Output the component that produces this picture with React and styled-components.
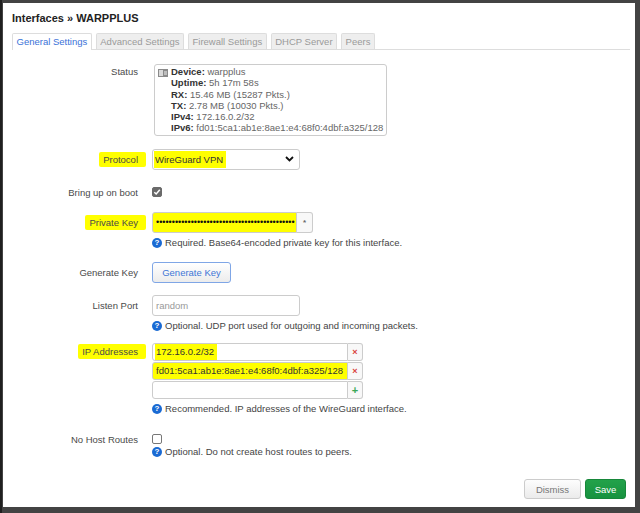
import React from 'react';
import styled, { createGlobalStyle } from 'styled-components';

const GlobalStyle = createGlobalStyle`
  html, body { margin: 0; padding: 0; }
  body {
    background: #404040;
    font-family: "Liberation Sans", Arial, sans-serif;
  }
`;

const Page = styled.div`
  width: 640px;
  height: 513px;
  box-sizing: border-box;
  padding: 3px 5px 6px 3px;
  background: linear-gradient(to right, #1f1f1f 0 2px, #434343 2px);
`;

const Modal = styled.div`
  height: 100%;
  box-sizing: border-box;
  background: #fff;
  padding: 8px 9px 8px 0;
  display: flex;
  flex-direction: column;
`;

const Title = styled.h2`
  margin: 0 0 0 9px;
  font-size: 11px;
  line-height: 14px;
  font-weight: bold;
  color: #222;
`;

const TabList = styled.div`
  display: flex;
  gap: 4px;
  margin: 8px -4px 0 9px;
  border-bottom: 1px solid #ddd;
  height: 16px;
`;

const Tab = styled.div`
  box-sizing: border-box;
  height: ${p => (p.$active ? 17 : 16)}px;
  padding: 0 3.5px;
  border: 1px solid #ddd;
  border-bottom: none;
  border-radius: 2px 2px 0 0;
  background: ${p => (p.$active ? '#fff' : '#eee')};
  color: ${p => (p.$active ? '#3a72d8' : '#9a9a9a')};
  font-size: 9.5px;
  line-height: 15px;
  white-space: nowrap;
`;

const Form = styled.div`
  display: flex;
  flex-direction: column;
`;

const Row = styled.div`
  display: grid;
  grid-template-columns: 149px 1fr;
  margin-top: ${p => p.$mt}px;
`;

const Label = styled.div`
  text-align: right;
  padding-right: 14px;
  font-size: 9.5px;
  line-height: ${p => p.$lh}px;
  color: #4a4a4a;
  white-space: nowrap;
`;

const Mark = styled.span`
  background: #ffff00;
  padding: 2px 8px 2px 4px;
  margin: 0 -8px 0 -4px;
  border-radius: 2px;
`;

const Field = styled.div`
  display: flex;
  flex-direction: column;
  align-items: flex-start;
`;

const StatusBox = styled.div`
  margin-left: 2px;
  border: 1px solid #ccc;
  border-radius: 3px;
  padding: 1px 3px 1px 3px;
  display: flex;
  gap: 3px;
  font-size: 9.5px;
  line-height: 11.3px;
  color: #666;
`;

const StatusIcon = styled.div`
  padding-top: 2px;
`;

const StatusLines = styled.div`
  display: flex;
  flex-direction: column;
  white-space: nowrap;
  b { color: #333; }
`;

const Select = styled.div`
  box-sizing: border-box;
  width: 148px;
  height: 21px;
  border: 1px solid #ccc;
  border-radius: 3px;
  display: flex;
  align-items: center;
  justify-content: space-between;
  padding: 0 5px 0 2px;
  font-size: 9.5px;
  color: #333;
`;

const SelMark = styled.span`
  background: #ffff00;
  padding: 3px 3px 3px 1px;
  margin-left: -1px;
`;

const CheckBox = styled.div`
  box-sizing: border-box;
  width: 10px;
  height: 10px;
  margin-top: 2.5px;
  border-radius: 2px;
  border: 1px solid ${p => (p.$checked ? '#6a6a6a' : '#777')};
  background: ${p => (p.$checked ? '#6a6a6a' : '#fff')};
  display: flex;
  align-items: center;
  justify-content: center;
`;

const Group = styled.div`
  display: flex;
`;

const TextBox = styled.div`
  box-sizing: border-box;
  width: ${p => p.$w}px;
  height: ${p => p.$h || 21}px;
  border: 1px solid #ccc;
  border-radius: ${p => (p.$joined ? '3px 0 0 3px' : '3px')};
  background: ${p => (p.$marked ? '#ffff00' : '#fff')};
  display: flex;
  align-items: center;
  padding: 0 3px;
  font-size: 9.5px;
  color: ${p => (p.$placeholder ? '#999' : '#333')};
  white-space: nowrap;
  overflow: hidden;
`;

const Dots = styled.span`
  font-size: 9px;
  color: #111;
`;

const Addon = styled.div`
  box-sizing: border-box;
  width: ${p => p.$w || 16}px;
  height: ${p => p.$h || 21}px;
  border: 1px solid #ccc;
  border-left: none;
  border-radius: 0 3px 3px 0;
  background: #f8f8f8;
  display: flex;
  align-items: center;
  justify-content: center;
  font-size: ${p => p.$fs || 9}px;
  font-weight: bold;
  color: ${p => p.$color || '#666'};
`;

const Help = styled.div`
  display: flex;
  align-items: center;
  gap: 3px;
  margin-top: ${p => p.$mt ?? 4}px;
  font-size: 9.5px;
  line-height: 12px;
  color: #444;
  white-space: nowrap;
`;

const HelpIcon = styled.span`
  width: 10px;
  height: 10px;
  border-radius: 50%;
  background: #1a6ad3;
  color: #fff;
  font-size: 8px;
  font-weight: bold;
  line-height: 10px;
  text-align: center;
`;

const KeyButton = styled.div`
  box-sizing: border-box;
  width: 79px;
  height: 21px;
  border: 1px solid #7fa6e6;
  border-radius: 3px;
  background: linear-gradient(#ffffff, #ececec);
  color: #3f76d6;
  font-size: 9.5px;
  display: flex;
  align-items: center;
  justify-content: center;
`;

const DynList = styled.div`
  display: flex;
  flex-direction: column;
  gap: 1px;
`;

const Footer = styled.div`
  margin-top: auto;
  display: flex;
  justify-content: flex-end;
  gap: 4px;
`;

const FootButton = styled.div`
  box-sizing: border-box;
  height: 20px;
  width: ${p => p.$w}px;
  border-radius: 3px;
  border: 1px solid ${p => (p.$primary ? '#17873a' : '#ccc')};
  background: ${p => (p.$primary ? 'linear-gradient(#22a24a, #17923f)' : 'linear-gradient(#fdfdfd, #ebebeb)')};
  color: ${p => (p.$primary ? '#fff' : '#777')};
  font-size: 9.5px;
  display: flex;
  align-items: center;
  justify-content: center;
`;

const HelpLine = ({ children, mt }) => (
  <Help $mt={mt}>
    <HelpIcon>?</HelpIcon>
    <span>{children}</span>
  </Help>
);

const Check = () => (
  <svg width="8" height="8" viewBox="0 0 8 8">
    <path d="M1.3 4.2 L3.2 6 L6.8 1.8" fill="none" stroke="#fff" strokeWidth="1.5" />
  </svg>
);

export default function App() {
  return (
    <>
      <GlobalStyle />
      <Page>
        <Modal>
          <Title>Interfaces » WARPPLUS</Title>
          <TabList>
            <Tab $active>General Settings</Tab>
            <Tab>Advanced Settings</Tab>
            <Tab>Firewall Settings</Tab>
            <Tab>DHCP Server</Tab>
            <Tab>Peers</Tab>
          </TabList>
          <Form>
            <Row $mt={14}>
              <Label $lh={16}>Status</Label>
              <Field>
                <StatusBox>
                  <StatusIcon>
                    <svg width="10" height="8" viewBox="0 0 10 8">
                      <rect x="0" y="0" width="10" height="8" fill="#8a8a8a" />
                      <rect x="1" y="1" width="4" height="6" fill="#d9d9d9" />
                      <rect x="6" y="2" width="3" height="4" fill="#bdbdbd" />
                    </svg>
                  </StatusIcon>
                  <StatusLines>
                    <span><b>Device:</b> warpplus</span>
                    <span><b>Uptime:</b> 5h 17m 58s</span>
                    <span><b>RX:</b> 15.46 MB (15287 Pkts.)</span>
                    <span><b>TX:</b> 2.78 MB (10030 Pkts.)</span>
                    <span><b>IPv4:</b> 172.16.0.2/32</span>
                    <span><b>IPv6:</b> fd01:5ca1:ab1e:8ae1:e4:68f0:4dbf:a325/128</span>
                  </StatusLines>
                </StatusBox>
              </Field>
            </Row>

            <Row $mt={13}>
              <Label $lh={21}><Mark>Protocol</Mark></Label>
              <Field>
                <Select>
                  <SelMark>WireGuard VPN</SelMark>
                  <svg width="9" height="6" viewBox="0 0 9 6">
                    <path d="M1 1 L4.5 4.5 L8 1" fill="none" stroke="#111" strokeWidth="1.8" />
                  </svg>
                </Select>
              </Field>
            </Row>

            <Row $mt={15}>
              <Label $lh={15}>Bring up on boot</Label>
              <Field>
                <CheckBox $checked><Check /></CheckBox>
              </Field>
            </Row>

            <Row $mt={12}>
              <Label $lh={21}><Mark>Private Key</Mark></Label>
              <Field>
                <Group>
                  <TextBox $w={145} $joined $marked>
                    <Dots>{'•'.repeat(44)}</Dots>
                  </TextBox>
                  <Addon $w={16} $fs={8}>*</Addon>
                </Group>
                <HelpLine>Required. Base64-encoded private key for this interface.</HelpLine>
              </Field>
            </Row>

            <Row $mt={13}>
              <Label $lh={21}>Generate Key</Label>
              <Field>
                <KeyButton>Generate Key</KeyButton>
              </Field>
            </Row>

            <Row $mt={12}>
              <Label $lh={21}>Listen Port</Label>
              <Field>
                <TextBox $w={148} $placeholder>random</TextBox>
                <HelpLine>Optional. UDP port used for outgoing and incoming packets.</HelpLine>
              </Field>
            </Row>

            <Row $mt={11}>
              <Label $lh={18}><Mark>IP Addresses</Mark></Label>
              <Field>
                <DynList>
                  <Group>
                    <TextBox $w={196} $h={18} $joined><SelMark>172.16.0.2/32</SelMark></TextBox>
                    <Addon $w={15} $h={18} $color="#d9403a">×</Addon>
                  </Group>
                  <Group>
                    <TextBox $w={196} $h={18} $joined $marked>fd01:5ca1:ab1e:8ae1:e4:68f0:4dbf:a325/128</TextBox>
                    <Addon $w={15} $h={18} $color="#d9403a">×</Addon>
                  </Group>
                  <Group>
                    <TextBox $w={196} $h={18} $joined />
                    <Addon $w={15} $h={18} $fs={11} $color="#3aa757">+</Addon>
                  </Group>
                </DynList>
                <HelpLine>Recommended. IP addresses of the WireGuard interface.</HelpLine>
              </Field>
            </Row>

            <Row $mt={17}>
              <Label $lh={15}>No Host Routes</Label>
              <Field>
                <CheckBox />
                <HelpLine mt={2}>Optional. Do not create host routes to peers.</HelpLine>
              </Field>
            </Row>
          </Form>
          <Footer>
            <FootButton $w={57}>Dismiss</FootButton>
            <FootButton $w={41} $primary>Save</FootButton>
          </Footer>
        </Modal>
      </Page>
    </>
  );
}
